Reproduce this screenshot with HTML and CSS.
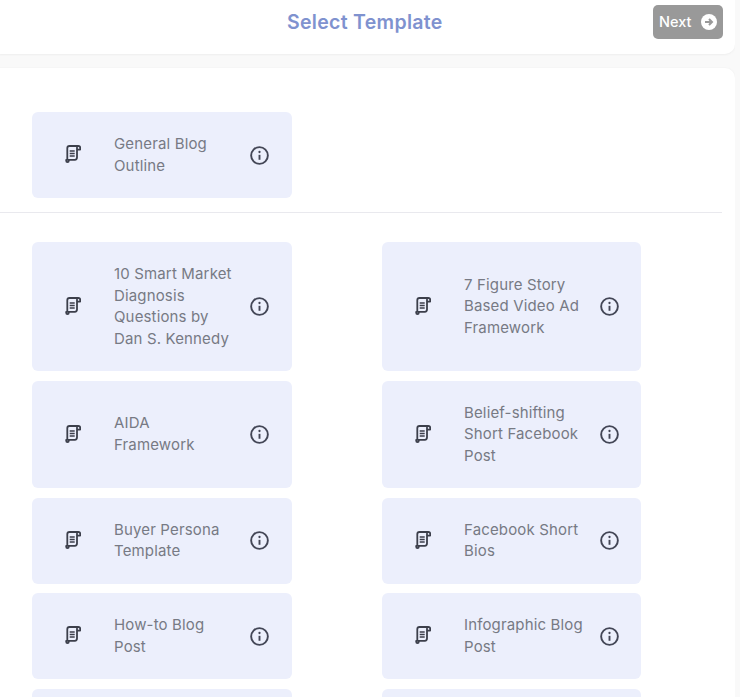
FILE: index.html
```html
<!DOCTYPE html>
<html lang="en">
<head>
<meta charset="utf-8">
<title>Select Template</title>
<link rel="stylesheet" href="styles.css">
</head>
<body>
<svg class="defs" aria-hidden="true">
  <symbol id="scroll" viewBox="0 0 16 18">
    <path d="M2.300 14.800V3.200A2.200 2.200 0 0 1 4.500 1H13.400A1.800 1.800 0 0 1 15.200 2.800V4.600H12M12 2.400V12.600A2.200 2.200 0 0 1 9.800 14.800H1.200V15.800A1.200 1.200 0 0 0 3.800 15.800V14.800" fill="none" stroke="currentColor" stroke-width="1.800" stroke-linejoin="round" stroke-linecap="round"/>
    <path d="M4.700 6h5M4.700 8.500h5M4.700 11h5" fill="none" stroke="currentColor" stroke-width="1.500"/>
  </symbol>
  <symbol id="info" viewBox="0 0 20 20">
    <circle cx="10" cy="10" r="8.800" fill="none" stroke="currentColor" stroke-width="2"/>
    <circle cx="10" cy="6.300" r="1.200" fill="currentColor"/>
    <path d="M10 9.300v5.200" fill="none" stroke="currentColor" stroke-width="2"/>
  </symbol>
</svg>
<div class="page">
  <header class="topbar">
    <h1 class="title">Select Template</h1>
    <button class="next" type="button">Next
      <svg class="next-icon" viewBox="0 0 16 16" aria-hidden="true"><circle cx="8" cy="8" r="8" fill="#fff"/><path d="M4 8h7M8 5l3 3-3 3" fill="none" stroke="#999" stroke-width="2"/></svg>
    </button>
  </header>
  <main class="panel">
    <section class="featured">
      <article class="card"><svg class="doc"><use href="#scroll"/></svg><p class="name">General Blog Outline</p><svg class="info"><use href="#info"/></svg></article>
    </section>
    <section class="grid">
      <article class="card"><svg class="doc"><use href="#scroll"/></svg><p class="name">10 Smart Market Diagnosis Questions by Dan S. Kennedy</p><svg class="info"><use href="#info"/></svg></article>
      <article class="card"><svg class="doc"><use href="#scroll"/></svg><p class="name">7 Figure Story Based Video Ad Framework</p><svg class="info"><use href="#info"/></svg></article>
      <article class="card"><svg class="doc"><use href="#scroll"/></svg><p class="name">AIDA Framework</p><svg class="info"><use href="#info"/></svg></article>
      <article class="card"><svg class="doc"><use href="#scroll"/></svg><p class="name">Belief-shifting Short Facebook Post</p><svg class="info"><use href="#info"/></svg></article>
      <article class="card"><svg class="doc"><use href="#scroll"/></svg><p class="name">Buyer Persona Template</p><svg class="info"><use href="#info"/></svg></article>
      <article class="card"><svg class="doc"><use href="#scroll"/></svg><p class="name">Facebook Short Bios</p><svg class="info"><use href="#info"/></svg></article>
      <article class="card"><svg class="doc"><use href="#scroll"/></svg><p class="name">How-to Blog Post</p><svg class="info"><use href="#info"/></svg></article>
      <article class="card"><svg class="doc"><use href="#scroll"/></svg><p class="name">Infographic Blog Post</p><svg class="info"><use href="#info"/></svg></article>
      <article class="card card-empty"></article>
      <article class="card card-empty"></article>
    </section>
  </main>
</div>
</body>
</html>
```

FILE: styles.css
```css
* { box-sizing: border-box; }
html, body { margin: 0; height: 100%; overflow: hidden; }
body {
  background: #f9f9f9;
  font-family: Inter, "Open Sans", sans-serif;
  color: #777a84;
}
.defs { display: none; }
.page {
  width: 745px;
  height: 697px;
  margin-left: -10px;
  display: flex;
  flex-direction: column;
  gap: 14px;
  overflow: hidden;
}
.topbar {
  position: relative;
  height: 54px;
  flex: none;
  background: #fff;
  border-radius: 0 0 10px 10px;
  box-shadow: 0 1px 2px #eeeeee;
  display: flex;
  align-items: flex-start;
  justify-content: flex-end;
  padding: 5px 12px 0 0;
}
.title {
  position: absolute;
  left: 297px;
  top: 10px;
  margin: 0;
  font-size: 19.500px;
  letter-spacing: 0.300px;
  line-height: 24px;
  font-weight: 600;
  color: #7f92cf;
}
.next {
  width: 70px;
  height: 34px;
  border: 0;
  border-radius: 5px;
  background: #999;
  color: #fff;
  font: 500 14.500px/20px Inter, sans-serif;
  display: flex;
  align-items: center;
  gap: 10px;
  padding: 0 6px;
}
.next-icon { width: 16px; height: 16px; flex: none; }
.panel {
  flex: 1;
  background: #fff;
  border-radius: 10px;
  box-shadow: 0 0 2px #eeeeee;
  padding: 44px 0 0 42px;
}
.featured {
  margin-left: -42px;
  padding: 0 0 14px 42px;
  width: 732px;
  border-bottom: 1px solid #e9e9ee;
}
.featured .card { width: 260px; }
.grid {
  margin-top: 29px;
  display: grid;
  grid-template-columns: 260px 259px;
  column-gap: 90px;
  row-gap: 9.500px;
}
.card {
  min-height: 86px;
  padding: 21px 23.500px 20.500px 33px;
  display: flex;
  align-items: center;
  background: #eceffc;
  border-radius: 6px;
}
.grid .card:nth-child(even) { padding-right: 22.500px; }
.doc {
  width: 16px;
  height: 18px;
  flex: none;
  color: #3c3f4b;
  margin: 0 33px 2px 0;
}
.name {
  width: 120.500px;
  flex: none;
  margin: 0 0 1.500px;
  font-size: 15px;
  letter-spacing: 0.150px;
  line-height: 21.500px;
}
.info {
  width: 19px;
  height: 19px;
  flex: none;
  margin-left: auto;
  color: #434656;
}
```
